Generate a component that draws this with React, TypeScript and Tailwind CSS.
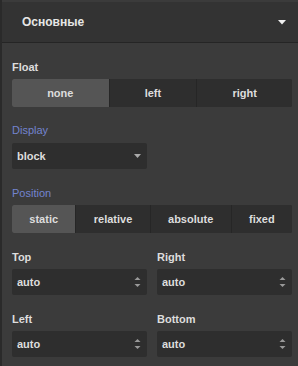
import React from "react";

const font = { fontFamily: '"Liberation Sans", Arial, sans-serif' };

function Segmented({ items, active }: { items: string[]; active: number }) {
  return (
    <div className="flex h-[28px] rounded-[2px] overflow-hidden bg-[#2e2e2e]">
      {items.map((it, i) => (
        <div
          key={it}
          className={
            "flex-auto flex items-center justify-center text-[11px] font-bold text-[#dddddd] " +
            (i === active ? "bg-[#555555] " : "bg-[#2e2e2e] ") +
            (i > 0 ? "border-l border-[#262626]" : "")
          }
        >
          {it}
        </div>
      ))}
    </div>
  );
}

function Spin() {
  return (
    <svg width="7" height="12" viewBox="0 0 7 12" className="shrink-0">
      <path d="M3.5 1 L6.5 4 L0.5 4 Z" fill="#999999" />
      <path d="M0.5 8 L6.5 8 L3.5 11 Z" fill="#999999" />
    </svg>
  );
}

function NumField({ label, value }: { label: string; value: string }) {
  return (
    <div className="flex-1 flex flex-col">
      <div className="text-[11px] leading-[13px] font-bold text-[#dddddd] mb-[5px]">{label}</div>
      <div className="h-[26px] bg-[#2e2e2e] rounded-[2px] flex items-center pl-[5px] pr-[6px] justify-between">
        <span className="text-[11px] font-bold text-[#dddddd]">{value}</span>
        <Spin />
      </div>
    </div>
  );
}

export default function App() {
  return (
    <div style={font} className="w-[298px] h-[366px] bg-[#3b3b3b] border-l-2 border-[#2a2a2a] pt-[2px] overflow-hidden">
      <div className="h-[41px] bg-[#333333] border-b border-[#252525] flex items-center justify-between pl-[20px] pr-[12px]">
        <span className="text-[12px] font-bold text-[#e6e6e6]">Основные</span>
        <svg width="8" height="5" viewBox="0 0 8 5">
          <path d="M0 0 L8 0 L4 4.5 Z" fill="#f0f0f0" />
        </svg>
      </div>
      <div className="pl-[10px] pr-[6px] pt-[18px]">
        <div className="text-[11px] leading-[13px] font-bold text-[#dddddd] mb-[5px]">Float</div>
        <Segmented items={["none", "left", "right"]} active={0} />

        <div className="mt-[17px] text-[11px] leading-[13px] text-[#7384cf] mb-[6px]">Display</div>
        <div className="w-[135px] h-[26px] bg-[#2e2e2e] rounded-[2px] flex items-center justify-between pl-[5px] pr-[6px]">
          <span className="text-[11px] font-bold text-[#dddddd]">block</span>
          <svg width="7" height="4" viewBox="0 0 7 4">
            <path d="M0 0 L7 0 L3.5 4 Z" fill="#aaaaaa" />
          </svg>
        </div>

        <div className="mt-[18px] text-[11px] leading-[13px] text-[#7384cf] mb-[5px]">Position</div>
        <Segmented items={["static", "relative", "absolute", "fixed"]} active={0} />

        <div className="mt-[18px] flex gap-[10px]">
          <NumField label="Top" value="auto" />
          <NumField label="Right" value="auto" />
        </div>
        <div className="mt-[18px] flex gap-[10px]">
          <NumField label="Left" value="auto" />
          <NumField label="Bottom" value="auto" />
        </div>
      </div>
    </div>
  );
}
